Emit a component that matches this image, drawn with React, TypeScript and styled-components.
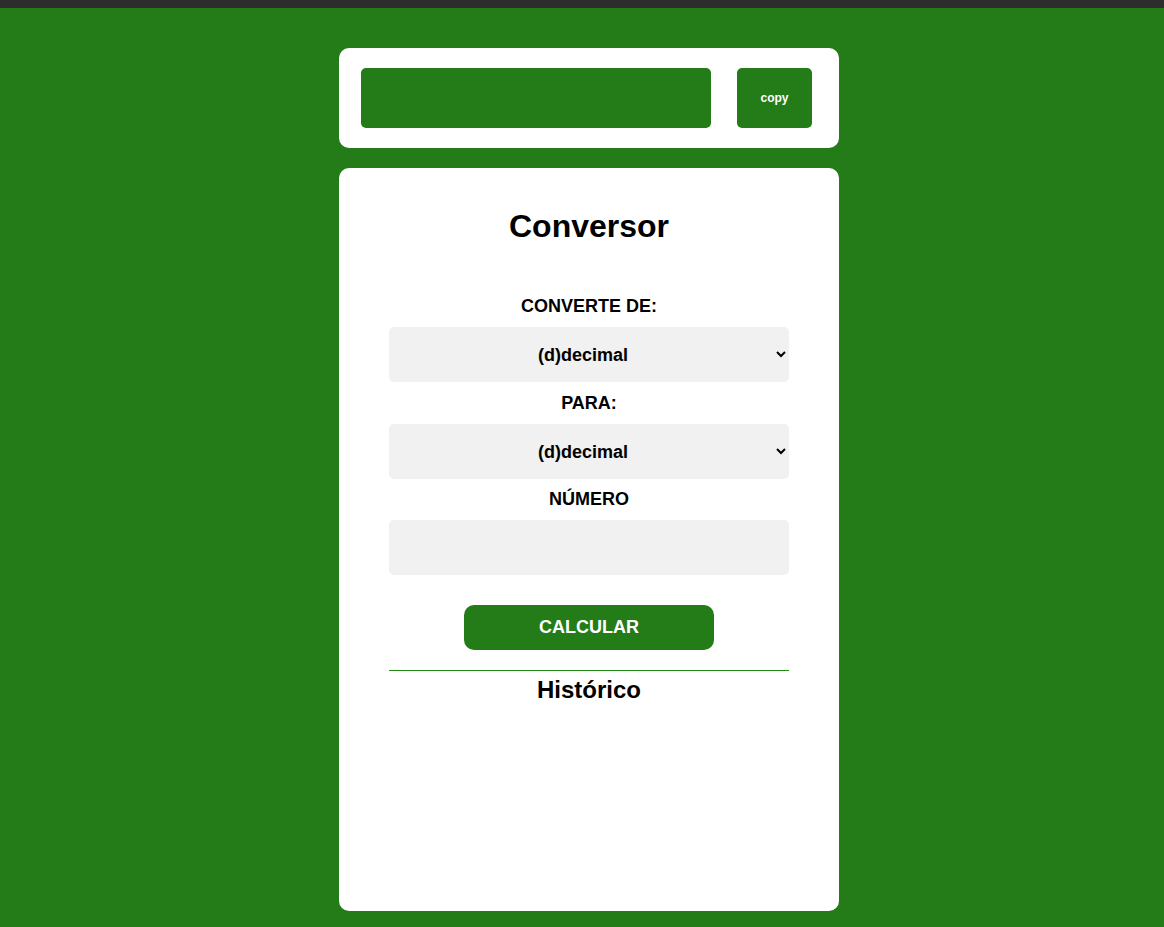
import React from "react";
import styled, { createGlobalStyle } from "styled-components";

const GREEN = "#237c18";

const Global = createGlobalStyle`
  html, body {
    margin: 0;
    padding: 0;
    background: ${GREEN};
    font-family: "Liberation Sans", Arial, sans-serif;
  }
  * { box-sizing: border-box; }
`;

const TopBar = styled.div`
  height: 8px;
  background: #2d2d2d;
`;

const Page = styled.main`
  width: 500px;
  margin: 40px 0 0 calc(50% - 243px);
  display: flex;
  flex-direction: column;
  gap: 20px;
`;

const CopyCard = styled.section`
  height: 100px;
  background: #fff;
  border-radius: 10px;
  padding: 20px 27px 20px 22px;
  display: flex;
  align-items: stretch;
  justify-content: space-between;
`;

const Output = styled.div`
  width: 350px;
  background: ${GREEN};
  border-radius: 5px;
`;

const CopyButton = styled.button`
  width: 75px;
  border: none;
  border-radius: 5px;
  background: ${GREEN};
  color: #fff;
  font-family: "Liberation Sans", Arial, sans-serif;
  font-weight: bold;
  font-size: 12px;
  padding: 0;
`;

const MainCard = styled.section`
  height: 743px;
  background: #fff;
  border-radius: 10px;
  display: flex;
  flex-direction: column;
  align-items: center;
`;

const Title = styled.h1`
  margin: 40px 0 0;
  font-size: 32px;
  line-height: 37px;
  font-weight: bold;
  color: #000;
`;

const Label = styled.label<{ $top: number }>`
  display: block;
  margin-top: ${(p) => p.$top}px;
  margin-bottom: 10px;
  font-size: 18px;
  line-height: 21px;
  font-weight: bold;
  color: #000;
  text-align: center;
`;

const Select = styled.select`
  width: 400px;
  height: 55px;
  border: none;
  border-radius: 5px;
  background: #f1f1f1;
  font-family: "Liberation Sans", Arial, sans-serif;
  font-size: 18px;
  font-weight: bold;
  color: #000;
  text-align: center;
  text-align-last: center;
  padding: 0 8px;
`;

const Input = styled.input`
  width: 400px;
  height: 55px;
  border: none;
  border-radius: 5px;
  background: #f1f1f1;
  font-family: "Liberation Sans", Arial, sans-serif;
  font-size: 18px;
  text-align: center;
`;

const Calculate = styled.button`
  margin-top: 30px;
  width: 250px;
  height: 45px;
  border: none;
  border-radius: 10px;
  background: ${GREEN};
  color: #fff;
  font-family: "Liberation Sans", Arial, sans-serif;
  font-size: 18px;
  font-weight: bold;
`;

const Divider = styled.div`
  margin-top: 20px;
  width: 400px;
  height: 0;
  border-top: 1px solid #1f8a10;
`;

const HistoryTitle = styled.h2`
  margin: 5px 0 0;
  font-size: 24px;
  line-height: 28px;
  font-weight: bold;
  color: #000;
`;

const options = [
  "(d)decimal",
  "(b)binário",
  "(o)octal",
  "(h)hexadecimal",
];

export default function App() {
  return (
    <>
      <Global />
      <TopBar />
      <Page>
        <CopyCard>
          <Output />
          <CopyButton>copy</CopyButton>
        </CopyCard>
        <MainCard>
          <Title>Conversor</Title>
          <Label $top={51}>CONVERTE DE:</Label>
          <Select defaultValue="(d)decimal">
            {options.map((o) => (
              <option key={o}>{o}</option>
            ))}
          </Select>
          <Label $top={11}>PARA:</Label>
          <Select defaultValue="(d)decimal">
            {options.map((o) => (
              <option key={o}>{o}</option>
            ))}
          </Select>
          <Label $top={10}>NÚMERO</Label>
          <Input type="text" />
          <Calculate>CALCULAR</Calculate>
          <Divider />
          <HistoryTitle>Histórico</HistoryTitle>
        </MainCard>
      </Page>
    </>
  );
}
